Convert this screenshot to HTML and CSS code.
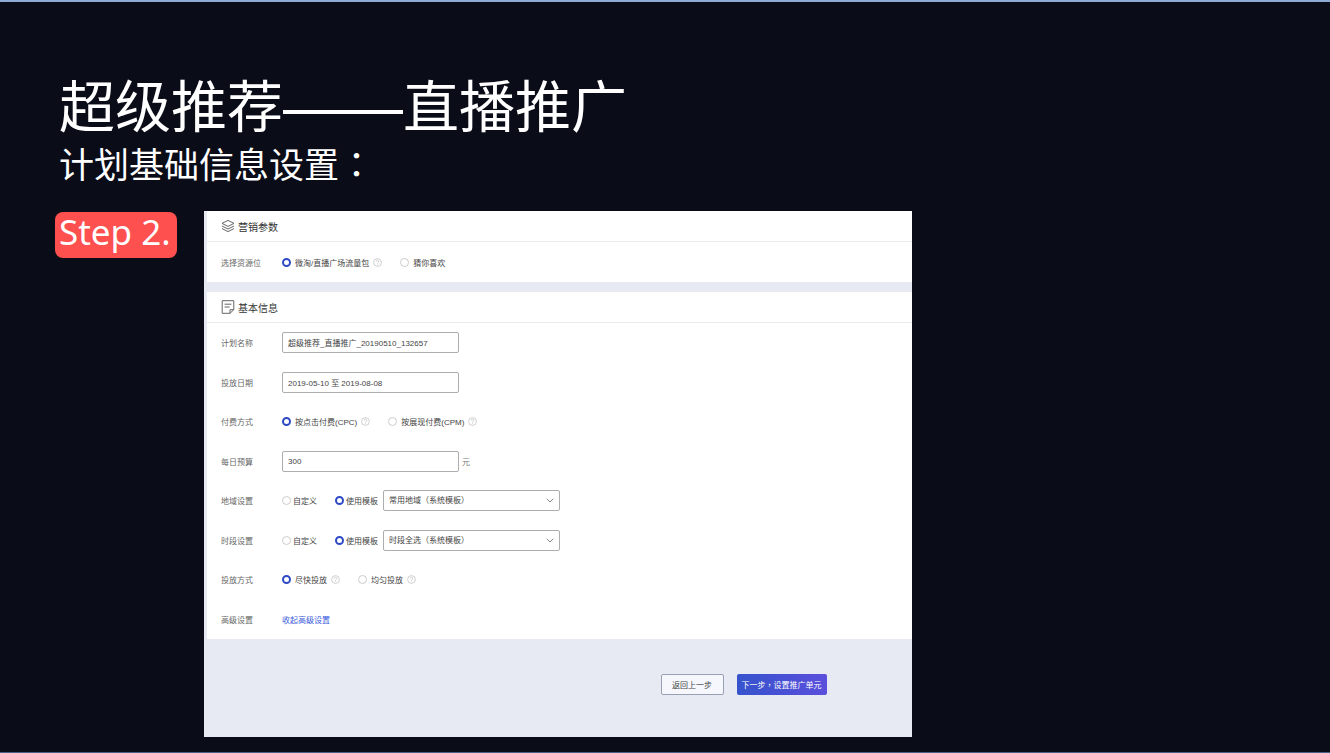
FILE: index.html
```html
<!DOCTYPE html>
<html lang="zh-CN">
<head>
<meta charset="utf-8">
<title>超级推荐——直播推广</title>
<link rel="stylesheet" href="styles.css">
</head>
<body>
<svg class="defs" aria-hidden="true">
  <symbol id="help" viewBox="0 0 9 9">
    <circle cx="4.5" cy="4.5" r="3.9"/>
    <path d="M3.2 3.6a1.3 1.3 0 1 1 1.9 1.1c-.5.3-.6.5-.6.9M4.5 6.4v.7"/>
  </symbol>
  <symbol id="chevron" viewBox="0 0 8 5"><path d="M.7.7 4 4 7.3.7"/></symbol>
</svg>
<main class="slide">
  <h1 class="title">超级推荐<span class="dash">——</span>直播推广</h1>
  <h2 class="subtitle">计划基础信息设置<span class="centered-mark" lang="zh-TW">：</span></h2>
  <div class="content">
    <div class="step">Step 2.</div>
    <form class="panel">
      <section class="card">
        <h3 class="card-title">
          <svg class="card-icon" viewBox="0 0 14 14"><path d="M7 1.4 13 4.4 7 7.4 1 4.4ZM1 7l6 3 6-3M1 9.6l6 3 6-3"/></svg>营销参数
        </h3>
        <div class="row source">
          <span class="label">选择资源位</span>
          <div class="options">
            <label class="option"><input class="radio" type="radio" name="source" checked>微淘/直播广场流量包<svg class="help"><use href="#help"/></svg></label>
            <label class="option"><input class="radio" type="radio" name="source">猜你喜欢</label>
          </div>
        </div>
      </section>
      <section class="card">
        <h3 class="card-title">
          <svg class="card-icon" viewBox="0 0 14 14"><path d="M9 13.3H1.2V.7h11.6v9ZM9 13.3V9.7h3.8M3.6 4.2h6.8M3.6 7h5"/></svg>基本信息
        </h3>
        <div class="rows">
          <div class="row">
            <label class="label" for="name">计划名称</label>
            <input class="field" id="name" type="text" value="超级推荐_直播推广_20190510_132657">
          </div>
          <div class="row">
            <label class="label" for="date">投放日期</label>
            <input class="field" id="date" type="text" value="2019-05-10 至 2019-08-08">
          </div>
          <div class="row">
            <span class="label">付费方式</span>
            <div class="options">
              <label class="option"><input class="radio" type="radio" name="pay" checked>按点击付费(CPC)<svg class="help"><use href="#help"/></svg></label>
              <label class="option"><input class="radio" type="radio" name="pay">按展现付费(CPM)<svg class="help"><use href="#help"/></svg></label>
            </div>
          </div>
          <div class="row">
            <label class="label" for="budget">每日预算</label>
            <input class="field" id="budget" type="text" value="300">
            <span class="unit">元</span>
          </div>
          <div class="row">
            <span class="label">地域设置</span>
            <div class="options tight">
              <label class="option"><input class="radio" type="radio" name="area">自定义</label>
              <label class="option"><input class="radio" type="radio" name="area" checked>使用模板</label>
            </div>
            <div class="picker">
              <select class="field" aria-label="地域模板"><option>常用地域（系统模板）</option></select>
              <svg class="chevron"><use href="#chevron"/></svg>
            </div>
          </div>
          <div class="row">
            <span class="label">时段设置</span>
            <div class="options tight">
              <label class="option"><input class="radio" type="radio" name="time">自定义</label>
              <label class="option"><input class="radio" type="radio" name="time" checked>使用模板</label>
            </div>
            <div class="picker">
              <select class="field" aria-label="时段模板"><option>时段全选（系统模板）</option></select>
              <svg class="chevron"><use href="#chevron"/></svg>
            </div>
          </div>
          <div class="row">
            <span class="label">投放方式</span>
            <div class="options">
              <label class="option"><input class="radio" type="radio" name="mode" checked>尽快投放<svg class="help"><use href="#help"/></svg></label>
              <label class="option"><input class="radio" type="radio" name="mode">均匀投放<svg class="help"><use href="#help"/></svg></label>
            </div>
          </div>
          <div class="row">
            <span class="label">高级设置</span>
            <a class="link" href="#">收起高级设置</a>
          </div>
        </div>
      </section>
      <footer class="actions">
        <button class="button" type="button">返回上一步</button>
        <button class="button primary" type="button">下一步<span class="centered-mark" lang="zh-TW">，</span>设置推广单元</button>
      </footer>
    </form>
  </div>
</main>
</body>
</html>
```

FILE: styles.css
```css
* { box-sizing: border-box; }

body {
  margin: 0;
  background: #0a0c18;
  font-family: "Liberation Sans", "Noto Sans CJK SC", sans-serif;
}

.defs { display: none; }

.slide {
  min-height: 100vh;
  padding: 67px 55px 15px;
  border-top: 2px solid #8fabd3;
  border-bottom: 1px solid #46608a;
}

.title,
.subtitle {
  margin: 0;
  padding-left: 4px;
  color: #fff;
  font-family: "Noto Sans CJK SC", sans-serif;
  font-weight: 400;
}

.title {
  font-size: 56px;
  line-height: 68px;
}

.dash {
  font-family: "Liberation Sans", sans-serif;
  font-size: 60px;
}

.subtitle {
  font-size: 35px;
  line-height: 44px;
}

.centered-mark { font-family: "Noto Sans CJK TC", sans-serif; }

.content {
  display: flex;
  align-items: flex-start;
  gap: 27px;
  margin-top: 26px;
}

.step {
  flex: none;
  width: 122px;
  height: 46px;
  margin-top: 1px;
  padding-left: 4px;
  border-radius: 8px;
  background: #ff5050;
  color: #fff;
  font-family: "Noto Sans", sans-serif;
  font-size: 35px;
  line-height: 40px;
  white-space: nowrap;
}

.panel {
  display: flex;
  flex-direction: column;
  gap: 10px;
  width: 53.2vw;
  min-width: 480px;
  padding-left: 3px;
  background: #e7eaf3;
  color: #444;
  font-size: 8px;
}

.card { background: #fff; }

.card-title {
  display: flex;
  align-items: center;
  gap: 3px;
  height: 31px;
  margin: 0;
  padding-left: 14px;
  border-bottom: 1px solid #e8eaee;
  color: #333;
  font-size: 10px;
  font-weight: 400;
}

.card-icon {
  width: 14px;
  height: 14px;
  fill: none;
  stroke: #666;
}

.rows {
  display: grid;
  grid-auto-rows: 1fr;
  min-height: 316px;
}

.row {
  display: flex;
  align-items: center;
  padding-left: 14px;
}

.source { height: 40px; }

.label {
  width: 61px;
  color: #666;
}

.options {
  display: flex;
  gap: 18px;
}

.option {
  display: flex;
  align-items: center;
  gap: 4px;
  white-space: nowrap;
}

.tight .option { gap: 2px; }

.radio {
  appearance: none;
  width: 9px;
  height: 9px;
  margin: 0;
  border: 1px solid #ccc;
  border-radius: 50%;
  background: #fff;
}

.radio:checked { border: 2px solid #2d49c4; }

.help {
  width: 9px;
  height: 9px;
  fill: none;
  stroke: #bbb;
  stroke-width: 0.7;
}

.field {
  width: 177px;
  height: 21px;
  padding: 0 5px;
  border: 1px solid #adadad;
  border-radius: 2px;
  background: #fff;
  color: #444;
  font: inherit;
  appearance: none;
}

.unit {
  margin-left: 3px;
  color: #777;
}

.picker {
  position: relative;
  margin-left: 5px;
}

.picker .field { display: block; }

.chevron {
  position: absolute;
  top: 8px;
  right: 6px;
  width: 8px;
  height: 5px;
  fill: none;
  stroke: #888;
  pointer-events: none;
}

.link {
  color: #3b5bdb;
  text-decoration: none;
}

.actions {
  display: flex;
  justify-content: flex-end;
  gap: 13px;
  padding: 25px 85px 42px 0;
}

.button {
  width: 63px;
  height: 21px;
  padding: 0;
  border: 1px solid #98a0b4;
  border-radius: 2px;
  background: #f5f7fc;
  color: #444;
  font: inherit;
  white-space: nowrap;
}

.primary {
  width: 90px;
  border: 0;
  background: linear-gradient(90deg, #3553cc, #5b4fdc);
  color: #fff;
}
```
